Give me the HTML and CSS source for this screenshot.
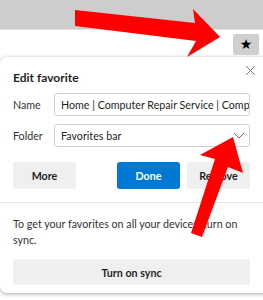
FILE: index.html
```html
<!DOCTYPE html>
<html lang="en">
<head>
  <meta charset="UTF-8" />
  <title>Edit favorite</title>
  <link rel="stylesheet" href="styles.css">
</head>
<body>

<div class="tabstrip"></div>

<div class="toolbar">
  <button class="star-btn" title="Favorite">&#9733;</button>
</div>

<div class="flyout">
  <div class="flyout-head">
    <h2>Edit favorite</h2>
    <svg class="close" width="11" height="11" viewBox="0 0 11 11">
      <path d="M1 1 L10 10 M10 1 L1 10" stroke="#777" stroke-width="1" fill="none"/>
    </svg>
  </div>

  <div class="field-row">
    <label>Name</label>
    <div class="field">Home | Computer Repair Service | Compse</div>
  </div>

  <div class="field-row">
    <label>Folder</label>
    <div class="field select">
      <span>Favorites bar</span>
      <svg width="12" height="7" viewBox="0 0 12 7">
        <path d="M1 1 L6 6 L11 1" stroke="#666" stroke-width="1" fill="none"/>
      </svg>
    </div>
  </div>

  <div class="actions">
    <button class="btn">More</button>
    <span class="spacer"></span>
    <button class="btn primary">Done</button>
    <button class="btn">Remove</button>
  </div>

  <div class="sync">
    <p>To get your favorites on all your devices, turn on sync.</p>
    <button class="btn wide">Turn on sync</button>
  </div>
</div>

<!-- arrows drawn over the screenshot -->
<svg class="arrows" width="263" height="300" viewBox="0 0 263 300">
  <polygon points="75,10 195,23 193,9 220,37 187,57 196,41 75,26" fill="#ff0000"/>
  <polygon points="233,137 243,173 228,167 202,237 191,233 215,159 200,155" fill="#ff0000"/>
</svg>

</body>
</html>
```

FILE: styles.css
```css
body {
  margin: 0;
  padding: 0;
  width: 263px;
  height: 300px;
  overflow: hidden;
  font-family: Lato, "Noto Sans", sans-serif;
  font-size: 10.7px;
  color: #1f1f1f;
  background: #ffffff;
  position: relative;
}

.tabstrip {
  height: 29px;
  background-color: #cdcdcd;
}

.toolbar {
  height: 26px;
  border-top: 1px solid #e6e6e6;
  display: flex;
  justify-content: flex-end;
  align-items: flex-start;
  padding-right: 4px;
}

.star-btn {
  margin-top: 4px;
  width: 26px;
  height: 21px;
  padding: 0;
  border: none;
  border-radius: 2px;
  background-color: #cfcfcf;
  color: #000;
  font-size: 14px;
  line-height: 21px;
  font-family: "DejaVu Sans", sans-serif;
}

.flyout {
  margin-top: 1px;
  width: 275px;
  height: 236px;
  background: #ffffff;
  border-radius: 7px;
  box-shadow: 0 1px 4px rgba(0, 0, 0, 0.35);
  padding: 0 13px;
  box-sizing: border-box;
}

.flyout-head {
  display: flex;
  justify-content: space-between;
  padding-top: 8px;
  padding-right: 6px;
  height: 34px;
  box-sizing: border-box;
}

.flyout-head h2 {
  margin: 5px 0 0;
  font-size: 12px;
  font-weight: 700;
}

.field-row {
  display: flex;
  align-items: center;
  width: 237px;
  height: 23px;
  margin-top: 8px;
}

.flyout-head + .field-row {
  margin-top: 2px;
}

.field-row label {
  width: 41px;
  flex: none;
  color: #333;
}

.field {
  flex: 1;
  height: 23px;
  border: 1px solid #cfcfcf;
  border-radius: 3px;
  box-sizing: border-box;
  padding: 0 6px;
  line-height: 21px;
  white-space: nowrap;
  overflow: hidden;
}

.select {
  display: flex;
  justify-content: space-between;
  align-items: center;
  padding-right: 4px;
}

.actions {
  display: flex;
  width: 237px;
  gap: 7px;
  margin-top: 15px;
}

.spacer {
  flex: 1;
}

.btn {
  width: 63px;
  height: 27px;
  border: none;
  border-radius: 3px;
  background-color: #efefef;
  font-family: inherit;
  font-size: 10.7px;
  font-weight: 700;
  color: #1f1f1f;
  padding: 0;
}

.btn.primary {
  background-color: #0078d4;
  color: #ffffff;
}

.sync {
  margin: 13px -13px 0;
  padding: 0 13px;
  border-top: 1px solid #e5e5e5;
}

.sync p {
  margin: 13px 0 0;
  width: 237px;
  line-height: 16px;
  color: #333;
}

.btn.wide {
  width: 237px;
  margin-top: 11px;
  height: 26px;
}

.arrows {
  position: absolute;
  top: 0;
  left: 0;
  pointer-events: none;
}
```
